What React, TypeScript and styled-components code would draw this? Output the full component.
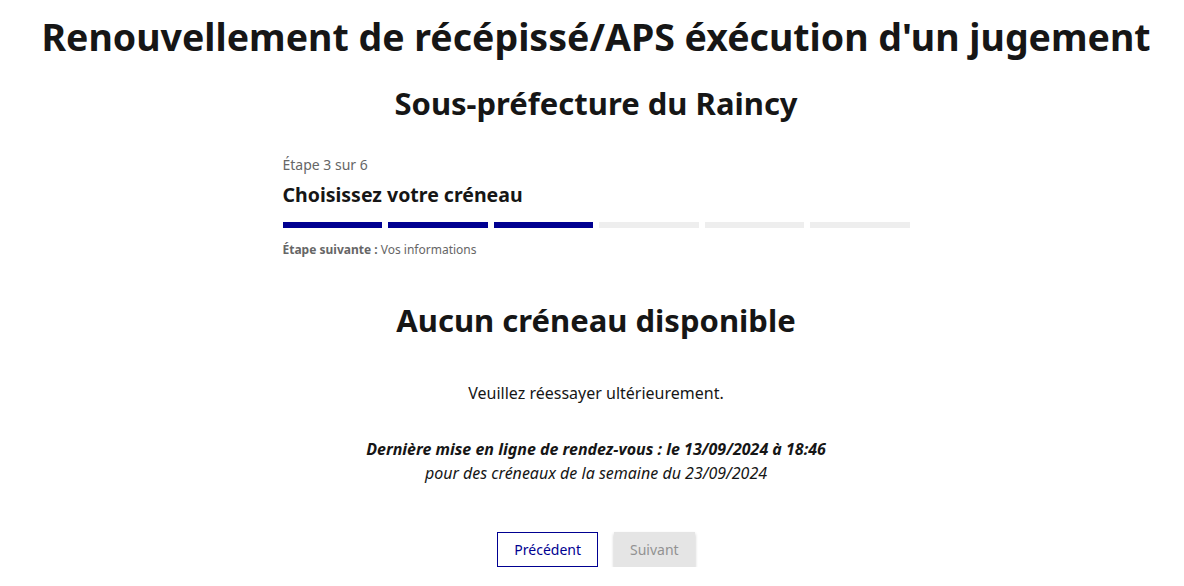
import React from "react";
import styled, { createGlobalStyle } from "styled-components";

const Global = createGlobalStyle`
  html, body { margin: 0; padding: 0; background: #fff; }
  body { font-family: "Noto Sans", "Open Sans", sans-serif; color: #161616; }
`;

const Page = styled.main`
  display: flex;
  flex-direction: column;
  align-items: center;
  padding: 11px 0 0 8px;
`;

const Title = styled.h1`
  margin: 0;
  font-size: 37.5px;
  line-height: 52px;
  font-weight: 700;
  text-align: center;
`;

const Subtitle = styled.h2`
  margin: 20px 0 0;
  font-size: 31px;
  line-height: 40px;
  font-weight: 700;
  text-align: center;
`;

const Stepper = styled.section`
  width: 627px;
  margin-top: 30px;
  display: flex;
  flex-direction: column;
`;

const StepState = styled.p`
  margin: 0;
  font-size: 14px;
  line-height: 24px;
  color: #666;
`;

const StepTitle = styled.h3`
  margin: 4px 0 0;
  font-size: 19.5px;
  line-height: 28px;
  font-weight: 700;
`;

const Bars = styled.div`
  margin-top: 13px;
  display: grid;
  grid-template-columns: repeat(6, 1fr);
  gap: 6px;
`;

const Bar = styled.div<{ $done: boolean }>`
  height: 6px;
  background: ${(p) => (p.$done ? "#000091" : "#eeeeee")};
`;

const NextStep = styled.p`
  margin: 12px 0 0;
  font-size: 12px;
  line-height: 20px;
  color: #666;
  b { font-weight: 700; }
`;

const Heading = styled.h2`
  margin: 40px 0 0;
  font-size: 31px;
  line-height: 40px;
  font-weight: 700;
  text-align: center;
`;

const Text = styled.p`
  margin: 41px 0 0;
  font-size: 16px;
  line-height: 24px;
  text-align: center;
`;

const Info = styled.p`
  margin: 32px 0 0;
  font-size: 16px;
  line-height: 24px;
  font-style: italic;
  text-align: center;
  b { font-weight: 700; }
`;

const Buttons = styled.div`
  margin-top: 47px;
  display: flex;
  gap: 16px;
`;

const Button = styled.button<{ $variant: "secondary" | "disabled" }>`
  font-family: inherit;
  font-size: 14px;
  line-height: 24px;
  padding: 4px 16px;
  height: 35px;
  cursor: pointer;
  background: ${(p) => (p.$variant === "disabled" ? "#e5e5e5" : "#fff")};
  color: ${(p) => (p.$variant === "disabled" ? "#929292" : "#000091")};
  border: ${(p) => (p.$variant === "disabled" ? "none" : "1px solid #000091")};
  box-shadow: ${(p) => (p.$variant === "disabled" ? "0 2px 3px rgba(0,0,0,0.25)" : "none")};
`;

export default function App() {
  const steps = [true, true, true, false, false, false];
  return (
    <>
      <Global />
      <Page>
        <Title>Renouvellement de récépissé/APS éxécution d'un jugement</Title>
        <Subtitle>Sous-préfecture du Raincy</Subtitle>
        <Stepper>
          <StepState>Étape 3 sur 6</StepState>
          <StepTitle>Choisissez votre créneau</StepTitle>
          <Bars>
            {steps.map((d, i) => (
              <Bar key={i} $done={d} />
            ))}
          </Bars>
          <NextStep>
            <b>Étape suivante :</b> Vos informations
          </NextStep>
        </Stepper>
        <Heading>Aucun créneau disponible</Heading>
        <Text>Veuillez réessayer ultérieurement.</Text>
        <Info>
          <b>Dernière mise en ligne de rendez-vous : le 13/09/2024 à 18:46</b>
          <br />
          pour des créneaux de la semaine du 23/09/2024
        </Info>
        <Buttons>
          <Button $variant="secondary">Précédent</Button>
          <Button $variant="disabled" disabled>Suivant</Button>
        </Buttons>
      </Page>
    </>
  );
}
